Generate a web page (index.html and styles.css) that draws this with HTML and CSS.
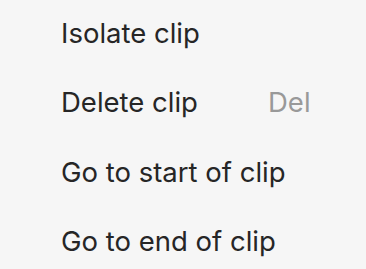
FILE: index.html
```html
<!DOCTYPE html>
<html lang="en">
<head>
    <meta charset="UTF-8">
    <title>Clip menu</title>
    <link rel="stylesheet" href="styles.css">
</head>
<body>
    <div class="menu">
        <div class="item"><span class="label">Isolate clip</span></div>
        <div class="item"><span class="label">Delete clip</span><span class="shortcut">Del</span></div>
        <div class="item"><span class="label">Go to start of clip</span></div>
        <div class="item"><span class="label">Go to end of clip</span></div>
    </div>
</body>
</html>
```

FILE: styles.css
```css
body {
    margin: 0;
    background-color: #f6f6f6;
    font-family: Inter, "Noto Sans", sans-serif;
    color: #262626;
}
.menu {
    display: flex;
    flex-direction: column;
    margin-top: -2px;
    padding: 0 0 0 61px;
}
.item {
    display: flex;
    align-items: center;
    height: 69.5px;
    font-size: 27.5px;
    white-space: nowrap;
}
.label {
    width: 207px;
}
.shortcut {
    color: #999;
}
```
